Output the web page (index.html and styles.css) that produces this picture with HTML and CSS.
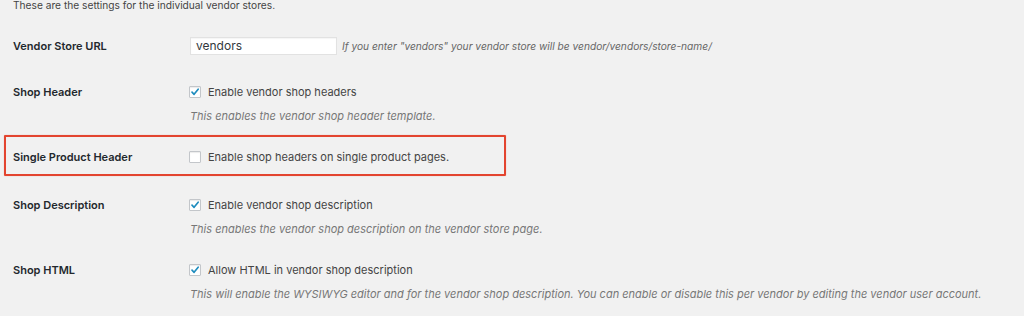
FILE: index.html
```html
<!DOCTYPE html>
<html lang="en">
<head>
<meta charset="utf-8">
<title>Vendor store settings</title>
<link rel="stylesheet" href="styles.css">
</head>
<body>
<p class="intro">These are the settings for the individual vendor stores.</p>
<div class="form">
  <div class="row row-text">
    <div class="label">Vendor Store URL</div>
    <div class="field">
      <div class="line">
        <span class="input">vendors</span>
        <span class="hint">If you enter "vendors" your vendor store will be vendor/vendors/store-name/</span>
      </div>
    </div>
  </div>

  <div class="row row-desc">
    <div class="label">Shop Header</div>
    <div class="field">
      <div class="line">
        <span class="check checked"><svg viewBox="0 0 12 12"><path d="M2.4 6.2 L4.9 8.8 L9.8 2.6"/></svg></span>
        <span class="opt">Enable vendor shop headers</span>
      </div>
      <div class="desc">This enables the vendor shop header template.</div>
    </div>
  </div>

  <div class="row row-plain">
    <div class="label">Single Product Header</div>
    <div class="field">
      <div class="line">
        <span class="check"></span>
        <span class="opt">Enable shop headers on single product pages.</span>
      </div>
    </div>
  </div>

  <div class="row row-desc">
    <div class="label">Shop Description</div>
    <div class="field">
      <div class="line">
        <span class="check checked"><svg viewBox="0 0 12 12"><path d="M2.4 6.2 L4.9 8.8 L9.8 2.6"/></svg></span>
        <span class="opt">Enable vendor shop description</span>
      </div>
      <div class="desc">This enables the vendor shop description on the vendor store page.</div>
    </div>
  </div>

  <div class="row row-desc">
    <div class="label">Shop HTML</div>
    <div class="field">
      <div class="line">
        <span class="check checked"><svg viewBox="0 0 12 12"><path d="M2.4 6.2 L4.9 8.8 L9.8 2.6"/></svg></span>
        <span class="opt">Allow HTML in vendor shop description</span>
      </div>
      <div class="desc">This will enable the WYSIWYG editor and for the vendor shop description. You can enable or disable this per vendor by editing the vendor user account.</div>
    </div>
  </div>
</div>
</body>
</html>
```
FILE: styles.css
```css
html, body {
  margin: 0;
  background: #f1f1f1;
}
body {
  font-family: Inter, "Noto Sans", "Liberation Sans", sans-serif;
  font-size: 11px;
  color: #444;
  height: 316px;
  overflow: hidden;
}
.intro {
  margin: -1px 0 0;
  padding-left: 13px;
  font-size: 10.2px;
  line-height: 12px;
  color: #444;
}
.form {
  margin-top: 26px;
}
.row {
  display: flex;
  padding-left: 13px;
}
.row-text { padding-bottom: 29px; }
.row-desc { padding-bottom: 25px; }
.row-plain {
  padding-bottom: 32px;
  position: relative;
}
.row-plain::after {
  content: "";
  position: absolute;
  left: 4px;
  top: -14px;
  width: 502px;
  height: 41px;
  box-sizing: border-box;
  border: 2px solid #e3452f;
  border-radius: 1px;
  box-shadow: 0 0 1px rgba(227, 69, 47, 0.5);
}
.label {
  width: 176px;
  flex: none;
  font-weight: 600;
  color: #23282d;
  line-height: 16px;
}
.row-text .label { line-height: 18px; }
.field {
  display: flex;
  flex-direction: column;
}
.line {
  display: flex;
  align-items: center;
  height: 16px;
}
.row-text .line { height: 18px; }
.input {
  box-sizing: border-box;
  width: 147px;
  height: 18px;
  margin-left: 1px;
  padding-left: 5px;
  background: #fff;
  border: 1px solid #e2e2e2;
  box-shadow: inset 0 1px 1px rgba(0, 0, 0, 0.04);
  font-size: 12px;
  line-height: 16px;
  color: #32373c;
}
.hint {
  margin-left: 5px;
  font-size: 10.2px;
  font-style: italic;
  color: #666;
}
.check {
  box-sizing: border-box;
  width: 12px;
  height: 12px;
  flex: none;
  background: #fff;
  border: 1px solid #c3c6ca;
  border-radius: 1px;
  box-shadow: inset 0 1px 1px rgba(0, 0, 0, 0.08);
  display: flex;
  align-items: center;
  justify-content: center;
}
.check svg {
  width: 10px;
  height: 10px;
  fill: none;
  stroke: #1e8cbe;
  stroke-width: 2;
  stroke-linecap: round;
  stroke-linejoin: round;
}
.opt {
  margin-left: 7px;
  color: #444;
}
.desc {
  margin-top: 8px;
  margin-left: 1px;
  font-style: italic;
  color: #777;
  line-height: 16px;
}
```
